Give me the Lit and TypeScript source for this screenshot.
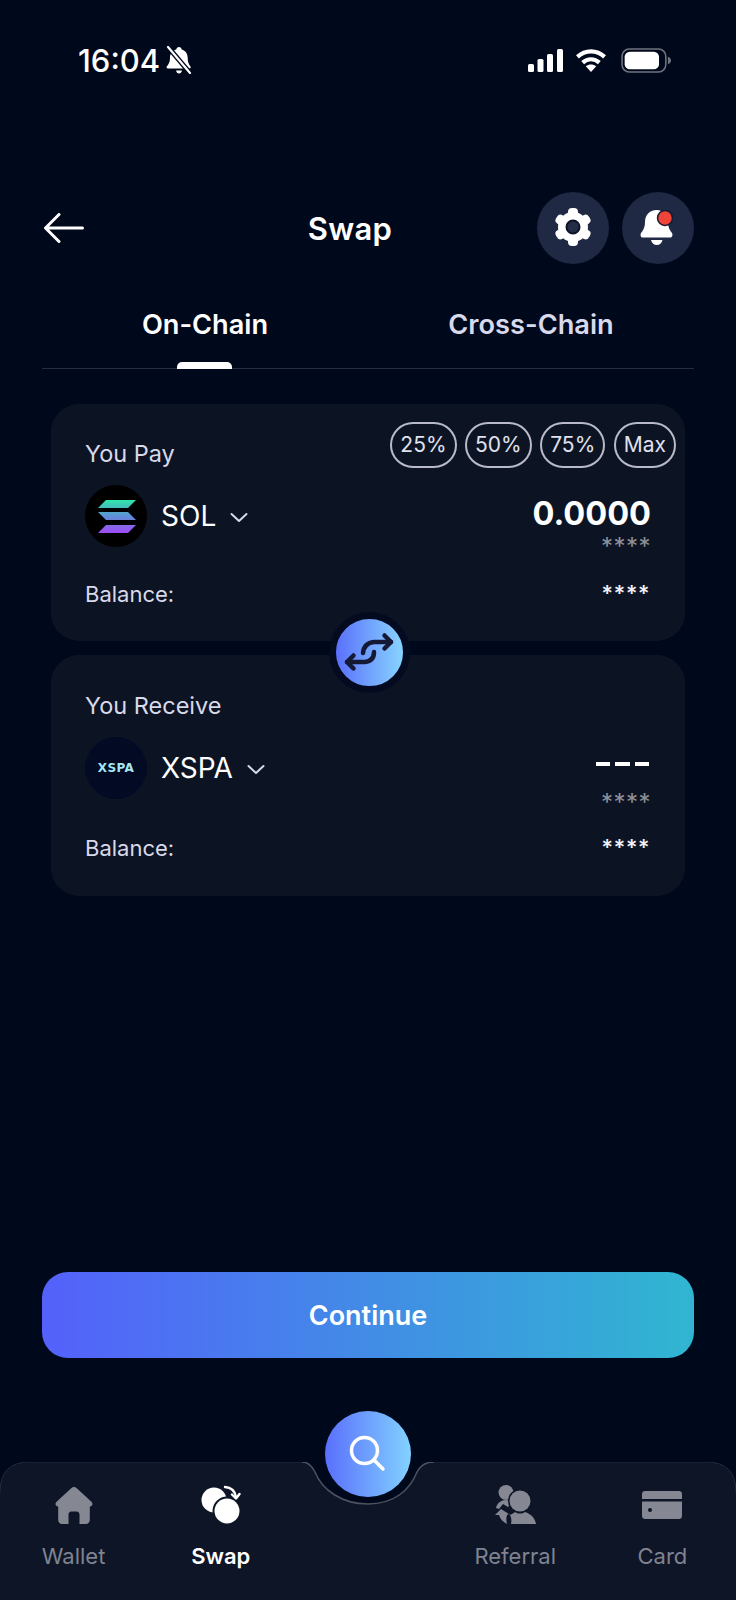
import { LitElement, html, css, svg } from 'lit';
import { customElement } from 'lit/decorators.js';

const chevron = html`<svg class="chev" width="18" height="11" viewBox="0 0 18 11" fill="none" stroke="#d8d9e8" stroke-width="2" stroke-linecap="round" stroke-linejoin="round"><path d="M1.5 2 9 9l7.5-7"/></svg>`;

const solana = html`<svg width="62" height="62" viewBox="0 0 62 62">
  <defs>
    <linearGradient id="sol" x1="0" y1="0" x2="0" y2="1">
      <stop offset="0" stop-color="#2ee6a8"/><stop offset="0.5" stop-color="#5f8fd8"/><stop offset="1" stop-color="#a04bf5"/>
    </linearGradient>
  </defs>
  <circle cx="31" cy="31" r="31" fill="#000"/>
  <path fill="url(#sol)" d="M21 15h30l-8 8H13zM13 27h30l8 8H21zM21 40h30l-8 8H13z"/>
</svg>`;

const navIcons = {
  home: svg`<path fill="#858893" d="M19 0c1 0 2 .4 2.8 1.2l14.6 13.600c2 1.900 1 4.600-1.600 4.900V33c0 2.200-1.600 4-3.800 4H24.500v-9.500c0-1.600-1.200-3-2.800-3h-5.400c-1.600 0-2.800 1.400-2.800 3V37H7c-2.200 0-3.800-1.800-3.800-4V19.700C.6 19.400-.4 16.700 1.600 14.800L16.200 1.200C17 .4 18 0 19 0z"/>`,
  swap: svg`<circle cx="14" cy="15" r="12.500" fill="#fff"/>
    <circle cx="27" cy="26" r="14.500" fill="#0e1526"/>
    <circle cx="27" cy="26" r="12.500" fill="#fff"/>
    <path d="M25 2c6 .5 10 4 11 10" fill="none" stroke="#fff" stroke-width="2.400" stroke-linecap="round"/>
    <path d="M32 9.500l4 4 3.500-4.500" fill="none" stroke="#fff" stroke-width="2.400" stroke-linecap="round" stroke-linejoin="round"/>`,
  referral: svg`<circle cx="11" cy="7.500" r="7.500" fill="#858893"/>
    <path fill="#858893" d="M1 23c1-5 5-8 10-8 3 0 5 1 6 3l-4 4-5-3-4 5z"/>
    <path fill="#858893" d="M6 24l-6 6h4c1 4 4 7 8 9-1-4-1-8 1-10l4 2z"/>
    <circle cx="25" cy="16" r="12" fill="#0e1526"/>
    <circle cx="25" cy="16" r="10.500" fill="#858893"/>
    <path fill="#858893" d="M16 39c1-4 0-7-1-9 2-1 4-2 5-3 3 2 7 2 10 0 6 2 10 6 11 12z"/>`,
  card: svg`<path fill="#858893" d="M3 0h34c1.700 0 3 1.300 3 3v5H0V3c0-1.700 1.300-3 3-3z"/>
    <path fill="#858893" d="M0 10.500h40V25c0 1.700-1.300 3-3 3H3c-1.700 0-3-1.300-3-3z"/>
    <circle cx="8" cy="19" r="2" fill="#0e1526"/>`,
};

const navItems = [
  { label: 'Wallet', icon: navIcons.home, w: 38, h: 37, box: '0 0 38 37', active: false },
  { label: 'Swap', icon: navIcons.swap, w: 41, h: 40, box: '0 0 41 40', active: true },
  null,
  { label: 'Referral', icon: navIcons.referral, w: 41, h: 40, box: '0 0 41 40', active: false },
  { label: 'Card', icon: navIcons.card, w: 40, h: 28, box: '0 0 40 28', active: false },
];

const notch = 'C308 0 312 4 315 10C322 28 342 42 368 42C394 42 410 28 417 10C420 4 426 0 434 0';

@customElement('app-root')
export class AppRoot extends LitElement {
  static styles = css`
    :host {
      display: flex;
      flex-direction: column;
      width: 736px;
      height: 1600px;
      overflow: hidden;
      background: #00081b;
      color: #fff;
      font-family: Inter, 'Noto Sans', sans-serif;
    }

    .status {
      display: flex;
      align-items: center;
      height: 28px;
      margin-top: 46px;
      padding: 0 65px 0 78px;
      font-size: 31px;
      font-weight: 500;
    }
    .time { margin-right: 6px; }
    .status-right {
      display: flex;
      align-items: center;
      gap: 14px;
      margin-left: auto;
    }
    .signal { margin-right: -2px; }

    .header {
      display: flex;
      align-items: center;
      height: 72px;
      margin-top: 118px;
      padding: 0 42px 0 44px;
    }
    .title {
      flex: 1;
      padding-left: 92px;
      text-align: center;
      font-size: 31px;
      font-weight: 600;
      letter-spacing: 0.3px;
    }
    .round {
      display: flex;
      align-items: center;
      justify-content: center;
      width: 72px;
      height: 72px;
      margin-left: 13px;
      border-radius: 50%;
      background: #1f2943;
    }

    .tabs {
      position: relative;
      display: grid;
      grid-template-columns: 1fr 1fr;
      height: 104px;
      margin: 0 42px;
      border-bottom: 1px solid #252d42;
      font-size: 27.200px;
      font-weight: 600;
    }
    .tab {
      position: relative;
      padding-top: 42px;
      line-height: 38px;
      text-align: center;
      color: #d9d9ee;
    }
    .tab.on { color: #fff; }
    .tab.on::after {
      content: '';
      position: absolute;
      left: 50%;
      bottom: -1px;
      width: 55px;
      height: 7px;
      margin-left: -28px;
      border-radius: 5px 5px 0 0;
      background: #fff;
    }

    .cards {
      position: relative;
      display: flex;
      flex-direction: column;
      gap: 14px;
      margin: 35px 51px 0;
    }
    .card {
      height: 237px;
      padding: 18px 9px 0 34px;
      box-sizing: border-box;
      border-radius: 28px;
      background: #0c1424;
    }
    .card.second {
      height: 241px;
      padding-top: 19px;
    }
    .top {
      display: flex;
      align-items: flex-end;
      justify-content: space-between;
      height: 46px;
    }
    .label {
      font-size: 23.500px;
      line-height: 28px;
      color: #d8d9ea;
    }
    .chips {
      display: flex;
      align-self: flex-start;
      gap: 8.500px;
    }
    .chip {
      height: 46px;
      padding: 0 8px;
      box-sizing: border-box;
      border: 2px solid #b9bac9;
      border-radius: 23px;
      font-size: 21px;
      line-height: 42px;
      color: #e0e1ee;
    }
    .token {
      display: flex;
      justify-content: space-between;
      height: 62px;
      margin-top: 17px;
      padding-right: 25px;
    }
    .coin {
      display: flex;
      align-items: center;
      font-size: 28px;
    }
    .coin svg:first-child, .logo { margin-right: 14px; }
    .chev { margin: 3px 0 0 14px; }
    .logo {
      display: flex;
      align-items: center;
      justify-content: center;
      width: 62px;
      height: 62px;
      border-radius: 50%;
      background: #020a24;
      font-family: 'DejaVu Sans', sans-serif;
      font-size: 12px;
      font-weight: 700;
      letter-spacing: 0.4px;
      color: #a6e6f5;
    }
    .amount {
      display: flex;
      flex-direction: column;
      align-items: flex-end;
    }
    .value {
      height: 43px;
      margin-top: 7px;
      font-size: 32.500px;
      line-height: 44px;
      font-weight: 700;
    }
    .dashes {
      display: flex;
      gap: 5px;
      height: 4px;
      margin: 25px 2px 25px 0;
    }
    .dashes i {
      width: 14.500px;
      height: 4px;
      background: #fff;
    }
    .masked {
      font-size: 24px;
      line-height: 24px;
      letter-spacing: 0.5px;
      color: #8f9199;
    }
    .balance {
      display: flex;
      justify-content: space-between;
      margin-top: 33px;
      padding-right: 26px;
      font-size: 22px;
      line-height: 28px;
      color: #d8d9ea;
    }
    .second .balance { margin-top: 35px; }
    .balance b {
      margin-top: -1px;
      font-size: 22px;
      font-weight: 600;
      letter-spacing: 0.3px;
      color: #f0f0f8;
    }
    .flip {
      position: absolute;
      top: 208px;
      left: 278px;
      display: flex;
      align-items: center;
      justify-content: center;
      width: 67px;
      height: 67px;
      border: 7px solid #040b20;
      border-radius: 50%;
      background: linear-gradient(90deg, #5a70fc, #88d4ff);
    }

    .continue {
      height: 86px;
      margin: 376px 42px 0;
      border-radius: 26px;
      background: linear-gradient(90deg, #5461fb, #30b6d1);
      font-size: 27px;
      line-height: 88px;
      font-weight: 600;
      text-align: center;
    }

    .nav {
      position: relative;
      display: grid;
      grid-template-columns: repeat(5, 1fr);
      height: 138px;
      margin-top: 104px;
    }
    .nav-bg {
      position: absolute;
      inset: 0;
    }
    .item {
      position: relative;
      display: flex;
      flex-direction: column;
      align-items: center;
      font-size: 22px;
      color: #7f8391;
    }
    .item.on {
      font-weight: 600;
      color: #fff;
    }
    .icon {
      display: flex;
      align-items: center;
      justify-content: center;
      height: 44px;
      margin-top: 21px;
    }
    .item span {
      margin-top: 15px;
      line-height: 28px;
    }
    .search {
      position: absolute;
      top: -51px;
      left: 325px;
      display: flex;
      align-items: center;
      justify-content: center;
      width: 86px;
      height: 86px;
      border-radius: 50%;
      background: linear-gradient(90deg, #5a6ffc, #82d2ff);
    }
  `;

  render() {
    return html`
      <div class="status">
        <span class="time">16:04</span>
        <svg width="26" height="28" viewBox="0 0 26 28">
          <path fill="#fff" d="M13 1c1.500 0 2.500 1 2.700 2.400 3.800 1 6 4.200 6 8.600 0 4 1 6 2.800 8.500.6 1 0 2-1.200 2H2c-1.200 0-1.800-1-1.200-2C2.800 18 4 16 4 12c0-4.400 2.300-7.600 6.300-8.600C10.500 2 11.500 1 13 1zM10 24.500h6c-.4 1.800-1.500 3-3 3s-2.600-1.200-3-3z"/>
          <path d="M2 1l22 26" stroke="#00081b" stroke-width="5"/>
          <path d="M2 1l22 26" stroke="#fff" stroke-width="2.200" stroke-linecap="round"/>
        </svg>
        <div class="status-right">
          <svg class="signal" width="35" height="23" viewBox="0 0 35 23" fill="#fff">
            <rect x="0" y="15" width="6" height="8" rx="1.500"/>
            <rect x="9.500" y="10" width="6" height="13" rx="1.500"/>
            <rect x="19" y="5" width="6" height="18" rx="1.500"/>
            <rect x="29" y="0" width="6" height="23" rx="1.500"/>
          </svg>
          <svg width="32" height="24" viewBox="0 0 30 23" fill="none" stroke="#fff" stroke-width="4">
            <path d="M2 8.500c7.500-7 18.500-7 26 0"/>
            <path d="M7 14c4.700-4.300 11.300-4.300 16 0"/>
            <path fill="#fff" stroke="none" d="M15 23l-5-5.500c3-2.400 7-2.400 10 0z"/>
          </svg>
          <svg width="50" height="25" viewBox="0 0 48 24">
            <rect x="1" y="1" width="42" height="22" rx="7" fill="none" stroke="#70737f" stroke-width="1.500"/>
            <rect x="3.500" y="3.500" width="33" height="17" rx="5" fill="#fff"/>
            <path d="M45 8.500c2 .5 3 2 3 3.500s-1 3-3 3.500z" fill="#70737f"/>
          </svg>
        </div>
      </div>

      <div class="header">
        <svg width="40" height="30" viewBox="0 0 40 30" fill="none" stroke="#fff" stroke-width="3" stroke-linecap="round" stroke-linejoin="round">
          <path d="M38.500 15H2M15 1.500 1.500 15 15 28.500"/>
        </svg>
        <div class="title">Swap</div>
        <div class="round">
          <svg width="38" height="40" viewBox="0 0 38 40">
            <g fill="#fff" transform="translate(19 19)">
              <circle r="15"/>
              <rect x="-5" y="-19" width="10" height="38" rx="4"/>
              <rect x="-5" y="-19" width="10" height="38" rx="4" transform="rotate(60)"/>
              <rect x="-5" y="-19" width="10" height="38" rx="4" transform="rotate(120)"/>
              <circle r="6.500" fill="#232d48" stroke="#0d1326" stroke-width="2"/>
            </g>
          </svg>
        </div>
        <div class="round">
          <svg width="36" height="36" viewBox="0 0 36 36">
            <path fill="#fff" d="M16.500 0c7 0 11.500 5 11.500 12 0 5 1.500 8 4 11 1 1.800.3 4.500-1.500 4.500H2.500C.7 27.500 0 24.800 1 23c2.500-3 4-6 4-11C5 5 9.500 0 16.500 0z"/>
            <path fill="#fff" d="M11 30h11.500c-.6 3-3 5-5.700 5s-5.200-2-5.800-5z"/>
            <circle cx="25" cy="8" r="7.500" fill="#f04438" stroke="#141a30" stroke-width="1.500"/>
          </svg>
        </div>
      </div>

      <div class="tabs">
        <div class="tab on">On-Chain</div>
        <div class="tab">Cross-Chain</div>
      </div>

      <div class="cards">
        <div class="card">
          <div class="top">
            <div class="label">You Pay</div>
            <div class="chips">
              ${['25%', '50%', '75%', 'Max'].map((c) => html`<div class="chip">${c}</div>`)}
            </div>
          </div>
          <div class="token">
            <div class="coin">${solana}SOL${chevron}</div>
            <div class="amount">
              <div class="value">0.0000</div>
              <div class="masked">****</div>
            </div>
          </div>
          <div class="balance"><span>Balance:</span><b>****</b></div>
        </div>
        <div class="card second">
          <div class="top"><div class="label">You Receive</div></div>
          <div class="token">
            <div class="coin"><div class="logo">XSPA</div>XSPA${chevron}</div>
            <div class="amount">
              <div class="dashes"><i></i><i></i><i></i></div>
              <div class="masked">****</div>
            </div>
          </div>
          <div class="balance"><span>Balance:</span><b>****</b></div>
        </div>
        <div class="flip">
          <svg width="67" height="67" viewBox="0 0 67 67" fill="none" stroke="#141a33" stroke-width="4.500" stroke-linecap="round" stroke-linejoin="round">
            <path d="M55 23H38q-10 1-11 11"/>
            <path d="M48.500 16.500 55 23l-6.500 6.500"/>
            <path d="M11 43h18q9-1 9-10"/>
            <path d="M17.500 36.500 11 43l6.500 6.500"/>
          </svg>
        </div>
      </div>

      <div class="continue">Continue</div>

      <div class="nav">
        <svg class="nav-bg" width="736" height="138" viewBox="0 0 736 138">
          <path fill="#0e1526" d="M0 30Q0 0 30 0H302${notch}H706Q736 0 736 30V138H0Z"/>
          <path fill="none" stroke="#232a3c" stroke-width="1" d="M0 30Q0 0 30 0H302M434 0H706Q736 0 736 30"/>
          <path fill="none" stroke="#4d5260" stroke-width="1.500" d="M302 0${notch}"/>
        </svg>
        ${navItems.map((n) =>
          n
            ? html`<div class="item ${n.active ? 'on' : ''}">
                <div class="icon"><svg width=${n.w} height=${n.h} viewBox=${n.box}>${n.icon}</svg></div>
                <span>${n.label}</span>
              </div>`
            : html`<div></div>`,
        )}
        <div class="search">
          <svg width="40" height="42" viewBox="0 0 40 42" fill="none" stroke="#fff" stroke-width="3.500" stroke-linecap="round">
            <circle cx="16.500" cy="17.500" r="13"/>
            <path d="M27 28l8 8"/>
          </svg>
        </div>
      </div>
    `;
  }
}
